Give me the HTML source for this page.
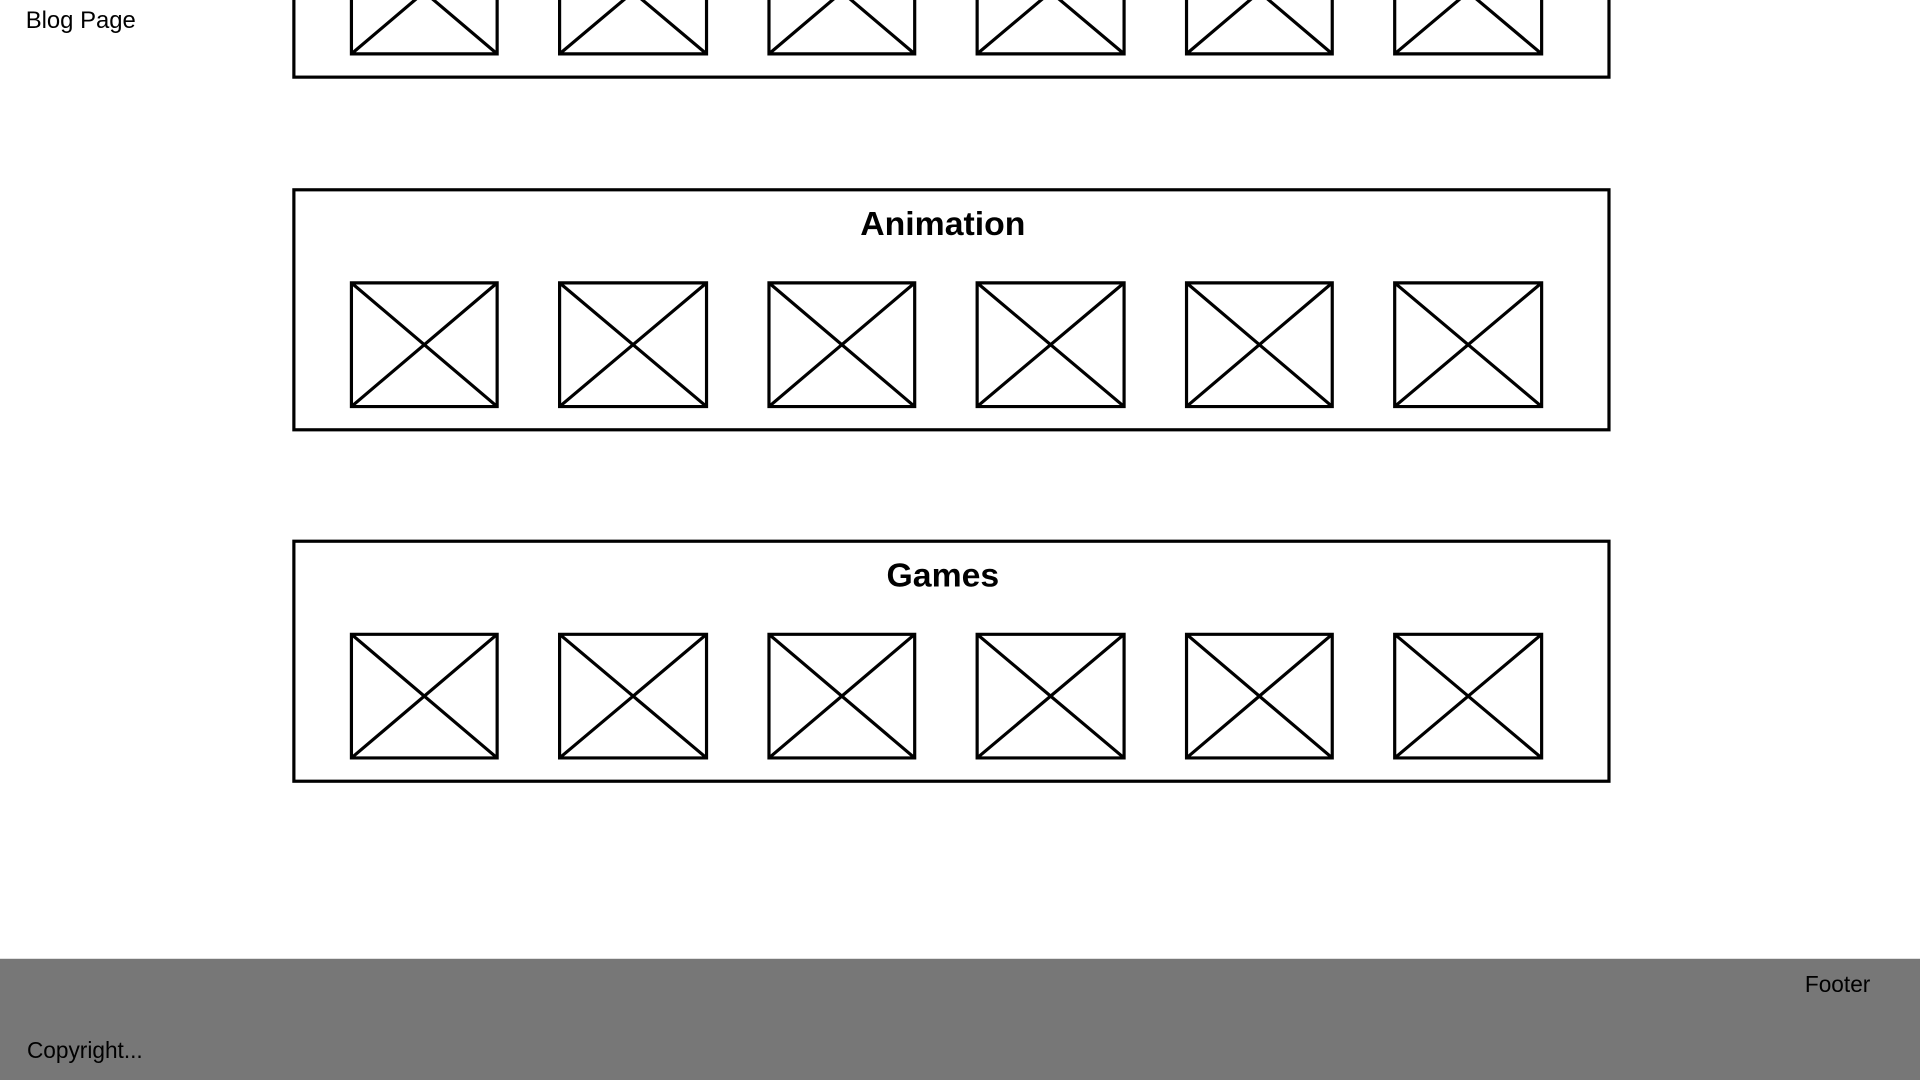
<!DOCTYPE html>
<html><head><meta charset="utf-8"><style>
html,body{margin:0;padding:0;background:#fff;overflow:hidden}
svg{display:block}
</style></head><body>
<svg width="1920" height="1080" viewBox="0 0 1568 882" xmlns="http://www.w3.org/2000/svg">
<rect width="1568" height="882" fill="#fff"/>
<text x="21" y="23" font-family="Liberation Sans, sans-serif" font-size="19.5" fill="#000">Blog Page</text>
<g fill="none" stroke="#000" stroke-width="2.6">
<rect x="240" y="-133" width="1074" height="196"/>
<rect x="240" y="155" width="1074" height="196"/>
<rect x="240" y="442" width="1074" height="196"/>
</g>
<g font-family="Liberation Sans, sans-serif" font-size="27.6" font-weight="bold" text-anchor="middle">
<text x="770" y="192">Animation</text>
<text x="770" y="479">Games</text>
</g>
<g fill="none" stroke="#000" stroke-width="2.6">
<path d="M287 -57h119v101h-119zM287 -57L406 44M406 -57L287 44
M457 -57h120v101h-120zM457 -57L577 44M577 -57L457 44
M628 -57h119v101h-119zM628 -57L747 44M747 -57L628 44
M798 -57h120v101h-120zM798 -57L918 44M918 -57L798 44
M969 -57h119v101h-119zM969 -57L1088 44M1088 -57L969 44
M1139 -57h120v101h-120zM1139 -57L1259 44M1259 -57L1139 44"/>
<path d="M287 231h119v101h-119zM287 231L406 332M406 231L287 332
M457 231h120v101h-120zM457 231L577 332M577 231L457 332
M628 231h119v101h-119zM628 231L747 332M747 231L628 332
M798 231h120v101h-120zM798 231L918 332M918 231L798 332
M969 231h119v101h-119zM969 231L1088 332M1088 231L969 332
M1139 231h120v101h-120zM1139 231L1259 332M1259 231L1139 332"/>
<path d="M287 518h119v101h-119zM287 518L406 619M406 518L287 619
M457 518h120v101h-120zM457 518L577 619M577 518L457 619
M628 518h119v101h-119zM628 518L747 619M747 518L628 619
M798 518h120v101h-120zM798 518L918 619M918 518L798 619
M969 518h119v101h-119zM969 518L1088 619M1088 518L969 619
M1139 518h120v101h-120zM1139 518L1259 619M1259 518L1139 619"/>
</g>
<rect x="0" y="783" width="1568" height="99" fill="#777777"/>
<text x="1474" y="810" font-family="Liberation Sans, sans-serif" font-size="18.5" fill="#000">Footer</text>
<text x="22" y="864" font-family="Liberation Sans, sans-serif" font-size="18.5" fill="#000">Copyright...</text>
</svg>
</body></html>
